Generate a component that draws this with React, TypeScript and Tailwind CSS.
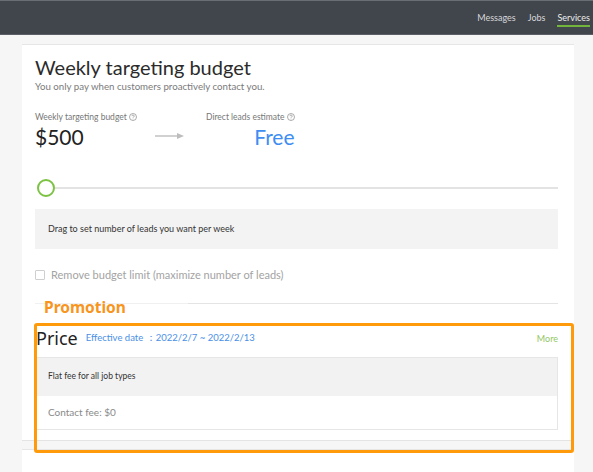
// Services > weekly targeting budget page, with the promotion block
// outlined in orange (an annotation laid over the price card).

const lato = { fontFamily: 'Lato, "Open Sans", sans-serif' };

function HelpIcon() {
  return (
    <svg width="8" height="8" viewBox="0 0 16 16" className="inline-block ml-[2px] -mt-[1px]">
      <circle cx="8" cy="8" r="7" fill="none" stroke="#888" strokeWidth="1.4" />
      <path d="M5.8 6.2a2.2 2.2 0 1 1 3.2 2c-.7.4-1 .8-1 1.5" fill="none" stroke="#888" strokeWidth="1.4" />
      <circle cx="8" cy="11.8" r="0.9" fill="#888" />
    </svg>
  );
}

function TopNav() {
  return (
    <div className="h-[35px] bg-[#41454c] border-t border-[#6a6d72] border-b border-b-[#5c6066] flex items-center justify-end pr-[3px]">
      <div className="flex items-center gap-[12px] text-[9px] text-[#d6d7d9] h-full">
        <span>Messages</span>
        <span>Jobs</span>
        <span className="relative flex items-center h-full text-[#eceded]">
          Services
          <span className="absolute left-0 right-0 top-[24px] h-[2px] bg-[#72b43c]" />
        </span>
      </div>
    </div>
  );
}

function Slider() {
  return (
    <div className="relative h-[18px] flex items-center">
      <div className="absolute left-[18px] right-0 h-[2px] bg-[#e3e3e3]" />
      <div className="relative w-[18px] h-[18px] rounded-full border-2 border-[#7cc243] bg-white" />
    </div>
  );
}

export default function App() {
  return (
    <div className="relative h-[472px] bg-[#f6f6f6] overflow-hidden" style={lato}>
      <TopNav />

      <div className="mt-[9px] ml-[22px] mr-[19px] bg-white border-t border-[#e6e6e6] border-b border-b-[#e4e4e4] pl-[13px] pr-[16px] pt-[10px]">
        <h1 className="text-[20px] leading-[24px] text-[#2b2b2b]">Weekly targeting budget</h1>
        <p className="text-[9.7px] leading-[13px] text-[#7a7a7a] mt-[1px]">
          You only pay when customers proactively contact you.
        </p>

        <div className="flex items-start mt-[19px]">
          <div className="w-[120px]">
            <div className="text-[8.5px] leading-[11px] text-[#777]">
              Weekly targeting budget
              <HelpIcon />
            </div>
            <div className="text-[21px] leading-[24px] text-[#222] mt-[2px]">$500</div>
          </div>
          <div className="pt-[20px] flex items-center">
            <svg width="30" height="8" viewBox="0 0 30 8">
              <line x1="0" y1="4" x2="23" y2="4" stroke="#bdbdbd" strokeWidth="1.4" />
              <path d="M22 1 L29 4 L22 7 Z" fill="#bdbdbd" />
            </svg>
          </div>
          <div className="ml-[21px] flex flex-col items-end">
            <div className="text-[8.5px] leading-[11px] text-[#777]">
              Direct leads estimate
              <HelpIcon />
            </div>
            <div className="text-[21px] leading-[24px] text-[#3d8df2] mt-[2px]">Free</div>
          </div>
        </div>

        <div className="mt-[30px] pl-[2px]">
          <Slider />
        </div>

        <div className="mt-[12px] h-[40px] bg-[#f3f3f3] flex items-center pl-[13px] text-[9px] text-[#333]">
          Drag to set number of leads you want per week
        </div>

        <label className="mt-[18px] flex items-center gap-[6px] text-[11px] text-[#a3a3a3]">
          <span className="w-[10px] h-[10px] border border-[#cfcfcf] rounded-[1px] bg-white" />
          Remove budget limit (maximize number of leads)
        </label>

        <div className="relative mt-[1px] h-[28px] flex items-center">
          <div className="absolute left-0 right-0 top-[18px] h-px bg-[#f0f0f0]" />
          <div className="absolute left-[153px] right-0 top-[18px] h-px bg-[#e4e4e4]" />
          <span
            className="relative pl-[9px] pt-[18px] text-[15.5px] font-bold text-[#f7951e]"
            style={{ fontFamily: '"Noto Sans", "Open Sans", sans-serif' }}
          >
            Promotion
          </span>
        </div>

        <div className="mt-[14px] flex items-end pl-[1px]">
          <span className="text-[18px] leading-[22px] text-[#222]" style={{ fontFamily: '"Noto Sans", sans-serif' }}>
            Price
          </span>
          <span className="ml-[8px] mb-[3px] text-[9.5px] text-[#4a90e6]">
            Effective date ：2022/2/7 ~ 2022/2/13
          </span>
          <span className="ml-auto mb-[3px] text-[9px] text-[#93c764]">More</span>
        </div>

        <div className="mt-[8px] border border-[#e6e6e6]">
          <div className="h-[38px] bg-[#f2f2f2] flex items-center pl-[12px] text-[8.5px] text-[#333]">
            Flat fee for all job types
          </div>
          <div className="h-[33px] bg-white flex items-center pl-[12px] text-[10px] text-[#8a8a8a]">
            Contact fee: $0
          </div>
        </div>
        <div className="h-[10px]" />
      </div>

      <div className="mt-[8px] ml-[22px] mr-[19px] h-[40px] bg-white border-t border-[#e6e6e6]" />

      {/* annotation outline over the promotion price block */}
      <div className="absolute left-[34px] top-[323px] w-[540px] h-[130px] border-[3px] border-[#ff9a0a] rounded-[3px] pointer-events-none" />
    </div>
  );
}
